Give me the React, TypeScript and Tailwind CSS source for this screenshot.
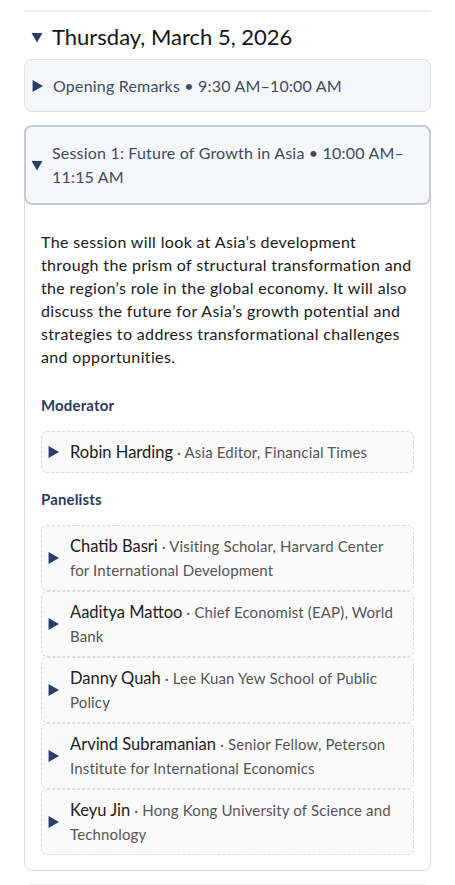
import React from "react";

type Person = { name: string; role: string };

const moderator: Person = { name: "Robin Harding", role: "Asia Editor, Financial Times" };

const panelists: Person[] = [
  { name: "Chatib Basri", role: "Visiting Scholar, Harvard Center for International Development" },
  { name: "Aaditya Mattoo", role: "Chief Economist (EAP), World Bank" },
  { name: "Danny Quah", role: "Lee Kuan Yew School of Public Policy" },
  { name: "Arvind Subramanian", role: "Senior Fellow, Peterson Institute for International Economics" },
  { name: "Keyu Jin", role: "Hong Kong University of Science and Technology" },
];

const Tri = ({ open = false, className = "" }: { open?: boolean; className?: string }) => (
  <svg
    viewBox="0 0 10 10"
    preserveAspectRatio="none"
    className={`shrink-0 fill-[#2c3d6b] ${className}`}
    style={{ transform: open ? "rotate(90deg)" : undefined }}
  >
    <path d="M0.5 0 L10 5 L0.5 10 Z" />
  </svg>
);

const PersonCard = ({ person }: { person: Person }) => (
  <div className="flex items-center gap-[11px] rounded-md border border-dashed border-[#dcdcdc] bg-[#fafafa] py-[8px] pl-[6px] pr-3">
    <Tri className="h-[12px] w-[11px]" />
    <p className="text-[16.5px] leading-[24px] text-[#1c1c1c]">
      {person.name}
      <span className="text-[15px] tracking-[0.01em] text-[#555]"> · {person.role}</span>
    </p>
  </div>
);

export default function App() {
  return (
    <div className="min-h-[885px] bg-white px-6 pt-[10px] font-['Lato',sans-serif]">
      <div className="border-t-2 border-[#eeeeee] pt-[11px]">
        <div className="flex items-center gap-[10px] pl-2 text-[22px] leading-[28px] text-[#151515]">
          <Tri open className="h-[11px] w-[10px]" />
          Thursday, March 5, 2026
        </div>

        <div className="mt-[8px] flex flex-col gap-[13px]">
          <div className="flex items-center gap-[10px] rounded-lg border border-[#dcdfe5] bg-[#f6f7f9] py-[13px] pl-[7px] pr-2 text-[16px] leading-[25px] tracking-[0.012em] text-[#3f4a63]">
            <Tri className="h-[12px] w-[11px]" />
            Opening Remarks • 9:30 AM–10:00 AM
          </div>

          <div className="rounded-lg border border-[#dedede]">
            <div className="-mx-px -mt-px flex items-center gap-[10px] rounded-lg border-2 border-[#c6cad6] bg-[#f6f7f9] py-[14px] pl-[6px] pr-[7px] text-[16px] leading-[24px] tracking-[0.012em] text-[#3f4a63]">
              <Tri open className="h-[11px] w-[10px]" />
              <span>Session 1: Future of Growth in Asia • 10:00 AM–11:15 AM</span>
            </div>

            <div className="px-4 pb-[15px] pt-[25px]">
              <p className="text-[16px] leading-[23px] tracking-[0.022em] text-[#1a1a1a]">
                The session will look at Asia’s development through the prism of structural transformation and the
                region’s role in the global economy. It will also discuss the future for Asia’s growth potential and
                strategies to address transformational challenges and opportunities.
              </p>

              <h4 className="mt-[25px] text-[15px] font-bold leading-[24px] tracking-[0.01em] text-[#2b3a5c]">
                Moderator
              </h4>
              <div className="mt-[14px]">
                <PersonCard person={moderator} />
              </div>

              <h4 className="mt-[14px] text-[15px] font-bold leading-[24px] tracking-[0.01em] text-[#2b3a5c]">
                Panelists
              </h4>
              <div className="mt-[14px] flex flex-col">
                {panelists.map((p) => (
                  <PersonCard key={p.name} person={p} />
                ))}
              </div>
            </div>
          </div>
        </div>

        <div className="mx-[6px] mt-[13px] border-t-2 border-[#eeeeee]" />
      </div>
    </div>
  );
}
